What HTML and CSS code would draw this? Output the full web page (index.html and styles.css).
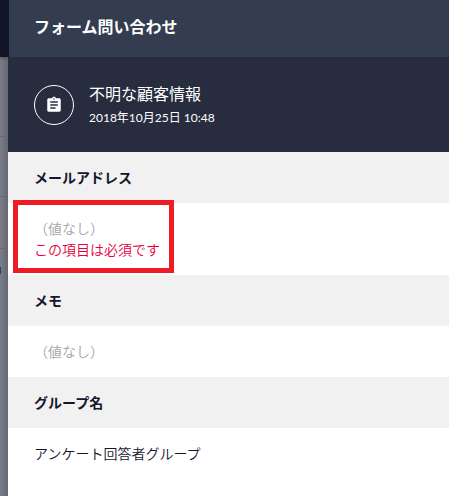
FILE: index.html
```html
<!DOCTYPE html>
<html lang="ja">
<head>
    <meta charset="UTF-8">
    <meta name="viewport" content="width=device-width, initial-scale=1.0">
    <title>フォーム問い合わせ</title>
    <link rel="stylesheet" href="styles.css">
</head>
<body>
    <div class="backdrop">
        <div class="backdrop-nav"></div>
        <div class="backdrop-row row-search"></div>
        <div class="backdrop-row row-head"></div>
        <div class="backdrop-row row-item"></div>
        <div class="backdrop-link"></div>
    </div>

    <div class="panel">
        <div class="panel-header">
            <h1>フォーム問い合わせ</h1>
        </div>

        <div class="customer">
            <div class="customer-icon">
                <svg width="18" height="18" viewBox="0 0 24 24" fill="currentColor">
                    <path d="M19 3h-4.18C14.4 1.84 13.3 1 12 1c-1.3 0-2.4.84-2.82 2H5c-1.1 0-2 .9-2 2v14c0 1.1.9 2 2 2h14c1.1 0 2-.9 2-2V5c0-1.1-.9-2-2-2zm-7 0c.55 0 1 .45 1 1s-.45 1-1 1-1-.45-1-1 .45-1 1-1zm2 14H7v-2h7v2zm3-4H7v-2h10v2zm0-4H7V7h10v2z"/>
                </svg>
            </div>
            <div class="customer-text">
                <div class="customer-name">不明な顧客情報</div>
                <div class="customer-date">2018年10月25日 10:48</div>
            </div>
        </div>

        <h2 class="field-label">メールアドレス</h2>
        <div class="field-value">
            <div class="empty">（値なし）</div>
            <div class="error">この項目は必須です</div>
            <div class="highlight"></div>
        </div>

        <h2 class="field-label">メモ</h2>
        <div class="field-value">
            <div class="empty">（値なし）</div>
        </div>

        <h2 class="field-label">グループ名</h2>
        <div class="field-value">
            <div>アンケート回答者グループ</div>
        </div>
    </div>
</body>
</html>
```

FILE: styles.css
```css
* {
    box-sizing: border-box;
}
body {
    display: flex;
    height: 496px;
    margin: 0;
    overflow: hidden;
    background: #fff;
    color: #14182b;
    font-family: Lato, "Noto Sans CJK JP", sans-serif;
    font-size: 14px;
    line-height: 21px;
}
.backdrop {
    width: 8px;
    flex-shrink: 0;
    background: linear-gradient(to right, #7b7d88, #666873);
}
.backdrop-nav {
    height: 57px;
    background: #101528;
    box-shadow: 0 1px 4px rgba(0,0,0,0.4);
}
.backdrop-row {
    border-bottom: 1px solid #666874;
}
.row-search {
    height: 80px;
}
.row-head {
    height: 60px;
}
.row-item {
    height: 52px;
}
.backdrop-link {
    width: 1px;
    height: 7px;
    margin-top: 18px;
    background: #164a70;
}
.panel {
    flex: 1;
    background: #fff;
}
.panel-header {
    height: 57px;
    padding: 0 26px;
    border-left: 1px solid #101528;
    background: #343c4f;
    color: #fff;
}
h1 {
    margin: 0 0 0 -1px;
    font-size: 16px;
    line-height: 54px;
}
.customer {
    display: flex;
    align-items: center;
    height: 95px;
    padding: 0 26px;
    background: #272d3f;
    color: #fff;
}
.customer-icon {
    display: flex;
    align-items: center;
    justify-content: center;
    width: 40px;
    height: 40px;
    margin-right: 15px;
    border: 1px solid #fff;
    border-radius: 50%;
}
.customer-text {
    padding-top: 2px;
}
.customer-name {
    font-size: 16px;
    line-height: 24px;
}
.customer-date {
    padding-top: 1px;
    font-size: 12px;
    line-height: 22px;
}
.field-label {
    height: 51px;
    margin: 0;
    padding: 15px 26px;
    background: #f1f1f1;
    font-size: 14px;
}
.field-value {
    position: relative;
    padding: 15px 26px;
    font-weight: 350;
}
.empty {
    color: #a3a3aa;
}
.error {
    color: #e6003e;
}
/* red frame around the required field message */
.highlight {
    position: absolute;
    top: -3px;
    left: 5px;
    width: 161px;
    height: 73px;
    border: 5px solid #ee1c25;
}
```
